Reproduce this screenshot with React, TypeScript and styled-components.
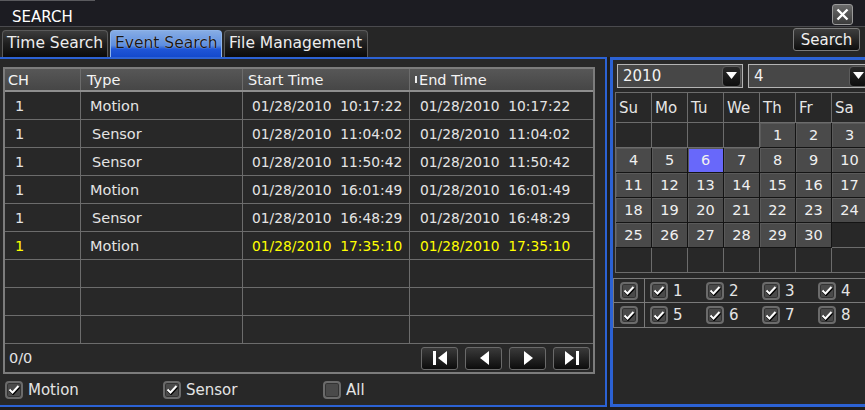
import React from "react";
import styled, { createGlobalStyle } from "styled-components";

const GlobalStyle = createGlobalStyle`
  html, body {
    margin: 0;
    padding: 0;
    background: #1d1d1d;
  }
  body {
    font-family: "DejaVu Sans", "Liberation Sans", sans-serif;
    width: 865px;
    height: 410px;
    overflow: hidden;
  }
`;

const events = [
  { ch: "1", type: "Motion", start: "01/28/2010  10:17:22", end: "01/28/2010  10:17:22" },
  { ch: "1", type: "Sensor", start: "01/28/2010  11:04:02", end: "01/28/2010  11:04:02" },
  { ch: "1", type: "Sensor", start: "01/28/2010  11:50:42", end: "01/28/2010  11:50:42" },
  { ch: "1", type: "Motion", start: "01/28/2010  16:01:49", end: "01/28/2010  16:01:49" },
  { ch: "1", type: "Sensor", start: "01/28/2010  16:48:29", end: "01/28/2010  16:48:29" },
  { ch: "1", type: "Motion", start: "01/28/2010  17:35:10", end: "01/28/2010  17:35:10", hot: true },
];

const weekDays = ["Su", "Mo", "Tu", "We", "Th", "Fr", "Sa"];

const Screen = styled.div`
  width: 865px;
  height: 410px;
  display: flex;
  flex-direction: column;
  background: #262626;
  color: #e6e6e6;
`;

const TitleBar = styled.div`
  height: 27px;
  display: flex;
  align-items: stretch;
  justify-content: space-between;
  background: #1c1c22;
  border-bottom: 1px solid #4a4a4e;
  box-sizing: border-box;
`;

const Title = styled.div`
  width: 95px;
  padding-left: 12px;
  box-sizing: border-box;
  border-top: 1px solid #5a5a5e;
  display: flex;
  align-items: center;
  padding-top: 6px;
  font-size: 15px;
  color: #fff;
`;

const CloseButton = styled.div`
  width: 19px;
  height: 19px;
  margin: 4px 12px 0 0;
  border: 1px solid #9a9a9a;
  border-radius: 3px;
  background: linear-gradient(#6a6a6a, #3c3c3c);
  display: flex;
  align-items: center;
  justify-content: center;
`;

const TabRow = styled.div`
  height: 30px;
  display: flex;
  align-items: flex-end;
  padding-left: 2px;
  gap: 2px;
  background: #262626;
`;

const Tab = styled.div<{ $w: number; $active?: boolean }>`
  width: ${(p) => p.$w}px;
  height: 27px;
  box-sizing: border-box;
  border: 1px solid ${(p) => (p.$active ? "#8fb4ea" : "#5a5a5a")};
  border-bottom: none;
  border-radius: 4px 4px 0 0;
  padding: 3px 0 0 4px;
  font-size: 15.5px;
  white-space: nowrap;
  color: ${(p) => (p.$active ? "#161616" : "#ededed")};
  text-shadow: ${(p) => (p.$active ? "0 0 1px #d8e6ff" : "none")};
  background: ${(p) =>
    p.$active
      ? "linear-gradient(#86ace4 0%, #5d8ee0 55%, #1f56d6 70%, #1449cc 100%)"
      : "linear-gradient(#3c3c3c 0%, #1e1e1e 50%, #0b0b0b 100%)"};
`;

const SearchButton = styled.div`
  margin: 1px 5px auto auto;
  width: 67px;
  height: 23px;
  box-sizing: border-box;
  border: 1px solid #7a7a7a;
  border-radius: 3px;
  background: linear-gradient(#3e3e3e, #0e0e0e);
  display: flex;
  align-items: center;
  justify-content: center;
  font-size: 15px;
  color: #f0f0f0;
`;

const Body = styled.div`
  flex: 1;
  display: flex;
  gap: 3px;
  background: #1d1d1d;
`;

const LeftPanel = styled.div`
  width: 607px;
  height: 350px;
  box-sizing: border-box;
  border: 2px solid #2c62d4;
  border-left: none;
  background: #282828;
  padding: 8px 10px 0 3px;
  display: flex;
  flex-direction: column;
`;

const TableBox = styled.div`
  border: 2px solid #7c7c7c;
  display: flex;
  flex-direction: column;
`;

const Row = styled.div<{ $head?: boolean }>`
  display: grid;
  grid-template-columns: 76px 162px 167px 1fr;
  height: ${(p) => (p.$head ? 23 : 28)}px;
  box-sizing: border-box;
  border-bottom: ${(p) => (p.$head ? "2px solid #8e8e8e" : "1px solid #6c6c6c")};
  background: ${(p) => (p.$head ? "linear-gradient(#575757, #464646)" : "#282828")};
`;

const Cell = styled.div<{ $pad: number; $hot?: boolean; $date?: boolean }>`
  display: flex;
  align-items: center;
  padding-left: ${(p) => p.$pad}px;
  border-right: 1px solid #6c6c6c;
  white-space: pre;
  font-size: ${(p) => (p.$date ? 13.8 : 14.5)}px;
  color: ${(p) => (p.$hot ? "#ffff00" : "#e4e4e4")};
  &:last-child {
    border-right: none;
  }
`;

const HeadCell = styled(Cell)`
  color: #f4f4f4;
  font-size: 14.5px;
`;

const Marker = styled.span`
  display: inline-block;
  width: 2px;
  height: 7px;
  background: #eee;
  margin-right: 2px;
`;

const Footer = styled.div`
  height: 28px;
  display: flex;
  align-items: center;
  justify-content: space-between;
  padding: 0 3px 0 4px;
  font-size: 14.5px;
  color: #e4e4e4;
`;

const NavGroup = styled.div`
  display: flex;
  gap: 7px;
`;

const NavButton = styled.div`
  width: 37px;
  height: 23px;
  box-sizing: border-box;
  border: 1px solid #6a6a6a;
  border-radius: 3px;
  background: linear-gradient(#3a3a3a, #0c0c0c);
  display: flex;
  align-items: center;
  justify-content: center;
`;

const FilterRow = styled.div`
  flex: 1;
  display: grid;
  grid-template-columns: 158px 160px auto;
  align-items: center;
  padding-left: 2px;
`;

const CheckItem = styled.label`
  display: flex;
  align-items: center;
  gap: 5px;
  font-size: 15px;
  color: #e4e4e4;
`;

const Box = styled.span`
  width: 18px;
  height: 18px;
  box-sizing: border-box;
  border: 2px solid #6b6b6b;
  border-radius: 4px;
  background: #4a4a4a;
  box-shadow: inset 0 0 0 1px #333;
  display: inline-flex;
  align-items: center;
  justify-content: center;
  flex: none;
`;

const RightPanel = styled.div`
  flex: 1;
  min-width: 0;
  height: 350px;
  box-sizing: border-box;
  border: 3px solid #2c62d4;
  border-right: none;
  background: #282828;
  padding: 4px 0 0 2px;
  overflow: hidden;
  display: flex;
  flex-direction: column;
`;

const SelectRow = styled.div`
  display: flex;
  gap: 5px;
  padding-left: 2px;
  height: 24px;
`;

const Select = styled.div<{ $w: number }>`
  width: ${(p) => p.$w}px;
  flex: none;
  box-sizing: border-box;
  border: 1px solid #b4b4b4;
  outline: 1px solid #2a2a2a;
  background: #474747;
  display: flex;
  align-items: center;
  justify-content: space-between;
  padding: 0 1px 0 5px;
  font-size: 15px;
  color: #f2f2f2;
`;

const DropButton = styled.span`
  width: 19px;
  height: 21px;
  box-sizing: border-box;
  border: 1px solid #5c5c5c;
  border-radius: 4px;
  background: linear-gradient(#2a2a2a, #0e0e0e);
  display: flex;
  align-items: center;
  justify-content: center;
`;

const Calendar = styled.div`
  margin-top: 4px;
  display: grid;
  grid-template-columns: repeat(7, 36px);
  grid-template-rows: 30px repeat(6, 25px);
  width: 252px;
  border-top: 1px solid #6c6c6c;
  border-left: 1px solid #6c6c6c;
  box-sizing: border-box;
`;

const WeekDay = styled.div`
  border-right: 1px solid #6c6c6c;
  border-bottom: 1px solid #6c6c6c;
  padding: 6px 0 0 3px;
  font-size: 15px;
  color: #e6e6e6;
`;

const Day = styled.div<{ $kind: "empty" | "day" | "today" }>`
  display: flex;
  align-items: center;
  justify-content: center;
  font-size: 14.5px;
  color: #f0f0f0;
  background: ${(p) => (p.$kind === "today" ? "#6868fa" : p.$kind === "day" ? "#4a4a4a" : "#282828")};
  border-right: 1px solid ${(p) => (p.$kind === "empty" ? "#6c6c6c" : "#141414")};
  border-bottom: 1px solid ${(p) => (p.$kind === "empty" ? "#6c6c6c" : "#141414")};
  box-shadow: ${(p) => (p.$kind === "empty" ? "none" : "inset 1px 1px 0 #5a5a5a")};
`;

const ChannelGrid = styled.div`
  margin-top: 5px;
  margin-left: -2px;
  width: 270px;
  border: 1px solid #7a7a7a;
  display: grid;
  grid-template-columns: 31px 1fr;
  grid-template-rows: 24px 24px;
`;

const AllCell = styled.div<{ $top?: boolean }>`
  border-right: 1px solid #7a7a7a;
  border-bottom: ${(p) => (p.$top ? "1px solid #7a7a7a" : "none")};
  display: flex;
  align-items: center;
  padding-left: 6px;
`;

const ChannelCell = styled.div<{ $top?: boolean }>`
  border-bottom: ${(p) => (p.$top ? "1px solid #7a7a7a" : "none")};
  display: grid;
  grid-template-columns: repeat(4, 56px);
  align-items: center;
  padding-left: 5px;
`;

const Check = () => (
  <svg width="12" height="11" viewBox="0 0 12 11">
    <path d="M1.5 5.5 L4.5 8.5 L10.5 2" fill="none" stroke="#000" strokeWidth="3" transform="translate(0.6,0.8)" />
    <path d="M1.5 5.5 L4.5 8.5 L10.5 2" fill="none" stroke="#fff" strokeWidth="2" />
  </svg>
);

const CheckBox = ({ checked = true }: { checked?: boolean }) => <Box>{checked && <Check />}</Box>;

const NavIcon = ({ dir, bar }: { dir: "l" | "r"; bar?: boolean }) => (
  <svg width="18" height="16" viewBox="0 0 18 16">
    {dir === "l" ? (
      <>
        {bar && <rect x="2" y="1" width="3" height="14" fill="#fff" />}
        <polygon points={bar ? "16,1 16,15 7,8" : "14,1 14,15 5,8"} fill="#fff" />
      </>
    ) : (
      <>
        <polygon points={bar ? "2,1 2,15 11,8" : "5,1 5,15 14,8"} fill="#fff" />
        {bar && <rect x="13" y="1" width="3" height="14" fill="#fff" />}
      </>
    )}
  </svg>
);

const DownArrow = () => (
  <svg width="11" height="8" viewBox="0 0 11 8">
    <polygon points="0,0 11,0 5.5,7" fill="#fff" />
  </svg>
);

export default function App() {
  const rows = [...events, ...Array(3).fill(null)];
  const cells: { n?: number }[] = [];
  for (let i = 0; i < 4; i++) cells.push({});
  for (let d = 1; d <= 30; d++) cells.push({ n: d });
  while (cells.length < 42) cells.push({});

  return (
    <>
      <GlobalStyle />
      <Screen>
        <TitleBar>
          <Title>SEARCH</Title>
          <CloseButton>
            <svg width="13" height="13" viewBox="0 0 13 13">
              <path d="M1.5 1.5 L11.5 11.5 M11.5 1.5 L1.5 11.5" stroke="#fff" strokeWidth="2.4" />
            </svg>
          </CloseButton>
        </TitleBar>

        <TabRow>
          <Tab $w={106}>Time Search</Tab>
          <Tab $w={112} $active>
            Event Search
          </Tab>
          <Tab $w={144}>File Management</Tab>
          <SearchButton>Search</SearchButton>
        </TabRow>

        <Body>
          <LeftPanel>
            <TableBox>
              <Row $head>
                <HeadCell $pad={3}>CH</HeadCell>
                <HeadCell $pad={6}>Type</HeadCell>
                <HeadCell $pad={5}>Start Time</HeadCell>
                <HeadCell $pad={5}>
                  <Marker />
                  End Time
                </HeadCell>
              </Row>
              {rows.map((r, i) => (
                <Row key={i}>
                  <Cell $pad={10} $hot={r?.hot}>
                    {r?.ch}
                  </Cell>
                  <Cell $pad={r?.type === "Sensor" ? 11 : 9}>{r?.type}</Cell>
                  <Cell $pad={9} $hot={r?.hot} $date>
                    {r?.start}
                  </Cell>
                  <Cell $pad={10} $hot={r?.hot} $date>
                    {r?.end}
                  </Cell>
                </Row>
              ))}
              <Footer>
                <span>0/0</span>
                <NavGroup>
                  <NavButton>
                    <NavIcon dir="l" bar />
                  </NavButton>
                  <NavButton>
                    <NavIcon dir="l" />
                  </NavButton>
                  <NavButton>
                    <NavIcon dir="r" />
                  </NavButton>
                  <NavButton>
                    <NavIcon dir="r" bar />
                  </NavButton>
                </NavGroup>
              </Footer>
            </TableBox>
            <FilterRow>
              <CheckItem>
                <CheckBox />
                Motion
              </CheckItem>
              <CheckItem>
                <CheckBox />
                Sensor
              </CheckItem>
              <CheckItem>
                <CheckBox checked={false} />
                All
              </CheckItem>
            </FilterRow>
          </LeftPanel>

          <RightPanel>
            <SelectRow>
              <Select $w={126}>
                2010
                <DropButton>
                  <DownArrow />
                </DropButton>
              </Select>
              <Select $w={122}>
                4
                <DropButton>
                  <DownArrow />
                </DropButton>
              </Select>
            </SelectRow>
            <Calendar>
              {weekDays.map((w) => (
                <WeekDay key={w}>{w}</WeekDay>
              ))}
              {cells.map((c, i) => (
                <Day key={i} $kind={c.n === undefined ? "empty" : c.n === 6 ? "today" : "day"}>
                  {c.n}
                </Day>
              ))}
            </Calendar>
            <ChannelGrid>
              <AllCell $top>
                <CheckBox />
              </AllCell>
              <ChannelCell $top>
                {[1, 2, 3, 4].map((n) => (
                  <CheckItem key={n}>
                    <CheckBox />
                    {n}
                  </CheckItem>
                ))}
              </ChannelCell>
              <AllCell>
                <CheckBox />
              </AllCell>
              <ChannelCell>
                {[5, 6, 7, 8].map((n) => (
                  <CheckItem key={n}>
                    <CheckBox />
                    {n}
                  </CheckItem>
                ))}
              </ChannelCell>
            </ChannelGrid>
          </RightPanel>
        </Body>
      </Screen>
    </>
  );
}
